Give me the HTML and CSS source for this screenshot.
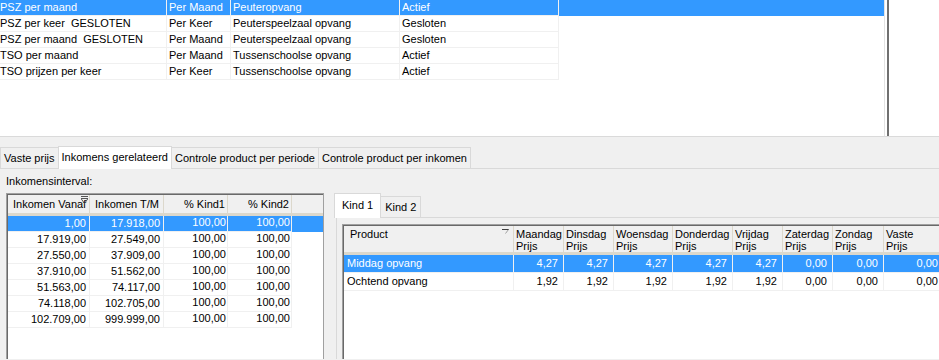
FILE: index.html
```html
<!DOCTYPE html>
<html>
<head>
<title>Producten</title>
<meta charset="utf-8">
<link rel="stylesheet" href="styles.css">
</head>
<body>
<div class="top">
  <div class="list">
    <div class="row sel"><span class="c c1">PSZ per maand</span><span class="c c2">Per Maand</span><span class="c c3">Peuteropvang</span><span class="c c4">Actief</span></div>
    <div class="row"><span class="c c1">PSZ per keer&nbsp; GESLOTEN</span><span class="c c2">Per Keer</span><span class="c c3">Peuterspeelzaal opvang</span><span class="c c4">Gesloten</span></div>
    <div class="row"><span class="c c1">PSZ per maand&nbsp; GESLOTEN</span><span class="c c2">Per Maand</span><span class="c c3">Peuterspeelzaal opvang</span><span class="c c4">Gesloten</span></div>
    <div class="row"><span class="c c1">TSO per maand</span><span class="c c2">Per Maand</span><span class="c c3">Tussenschoolse opvang</span><span class="c c4">Actief</span></div>
    <div class="row"><span class="c c1">TSO prijzen per keer</span><span class="c c2">Per Keer</span><span class="c c3">Tussenschoolse opvang</span><span class="c c4">Actief</span></div>
  </div>
  <div class="split"></div>
  <div class="side"></div>
</div>

<div class="tabs">
  <span class="tab">Vaste prijs</span>
  <span class="tab on">Inkomens gerelateerd</span>
  <span class="tab">Controle product per periode</span>
  <span class="tab">Controle product per inkomen</span>
</div>

<div class="page">
  <div class="label">Inkomensinterval:</div>
  <div class="panes">
    <div class="igrid">
      <div class="ghead">
        <span class="h w1">Inkomen Vanaf<svg class="filter" width="7" height="8" viewBox="0 0 7 8"><path d="M0 0.5H7" stroke="#555" stroke-width="1"/><path d="M0 2.5H7L3.5 7.5Z" fill="none" stroke="#555" stroke-width="1"/></svg></span>
        <span class="h w2">Inkomen T/M</span>
        <span class="h w3 r">% Kind1</span>
        <span class="h w3 r">% Kind2</span>
      </div>
      <div class="grow sel"><span class="d w1">1,00</span><span class="d w2">17.918,00</span><span class="d w3 p">100,00</span><span class="d w3 p">100,00</span></div>
      <div class="grow"><span class="d w1">17.919,00</span><span class="d w2">27.549,00</span><span class="d w3 p">100,00</span><span class="d w3 p">100,00</span></div>
      <div class="grow"><span class="d w1">27.550,00</span><span class="d w2">37.909,00</span><span class="d w3 p">100,00</span><span class="d w3 p">100,00</span></div>
      <div class="grow"><span class="d w1">37.910,00</span><span class="d w2">51.562,00</span><span class="d w3 p">100,00</span><span class="d w3 p">100,00</span></div>
      <div class="grow"><span class="d w1">51.563,00</span><span class="d w2">74.117,00</span><span class="d w3 p">100,00</span><span class="d w3 p">100,00</span></div>
      <div class="grow"><span class="d w1">74.118,00</span><span class="d w2">102.705,00</span><span class="d w3 p">100,00</span><span class="d w3 p">100,00</span></div>
      <div class="grow"><span class="d w1">102.709,00</span><span class="d w2">999.999,00</span><span class="d w3 p">100,00</span><span class="d w3 p">100,00</span></div>
    </div>

    <div class="rpane">
      <div class="ktabs">
        <span class="ktab on">Kind 1</span>
        <span class="ktab">Kind 2</span>
      </div>
      <div class="kpage">
        <div class="pgrid">
          <div class="phead">
            <span class="ph k0">Product<svg class="sort" width="7" height="5" viewBox="0 0 7 5"><path d="M0 0.5H7" stroke="#404040"/><path d="M6.5 0.5L3.5 4.5" stroke="#a0a0a0"/></svg></span>
            <span class="ph k1">Maandag<br>Prijs</span>
            <span class="ph k1">Dinsdag<br>Prijs</span>
            <span class="ph k2">Woensdag<br>Prijs</span>
            <span class="ph k3">Donderdag<br>Prijs</span>
            <span class="ph k1">Vrijdag<br>Prijs</span>
            <span class="ph k1">Zaterdag<br>Prijs</span>
            <span class="ph k4">Zondag<br>Prijs</span>
            <span class="ph k5">Vaste<br>Prijs</span>
          </div>
          <div class="prow sel"><span class="pd k0 t">Middag opvang</span><span class="pd k1">4,27</span><span class="pd k1">4,27</span><span class="pd k2">4,27</span><span class="pd k3">4,27</span><span class="pd k1">4,27</span><span class="pd k1">0,00</span><span class="pd k4">0,00</span><span class="pd k5">0,00</span></div>
          <div class="prow"><span class="pd k0 t">Ochtend opvang</span><span class="pd k1">1,92</span><span class="pd k1">1,92</span><span class="pd k2">1,92</span><span class="pd k3">1,92</span><span class="pd k1">1,92</span><span class="pd k1">0,00</span><span class="pd k4">0,00</span><span class="pd k5">0,00</span></div>
        </div>
      </div>
    </div>
  </div>
</div>
</body>
</html>
```
FILE: styles.css
```css
body {
   margin: 0;
   width: 939px;
   height: 360px;
   overflow: hidden;
   background: #f0f0f0;
   font-family: "Liberation Sans", Arial, sans-serif;
   font-size: 11px;
   color: #000;
}

/* top product list */
.top {
   display: flex;
   height: 137px;
   box-sizing: border-box;
   background: #fff;
   border-bottom: 1px solid #dadada;
}
.list {
   width: 884px;
   border-right: 1px solid #e3e3e3;
}
.split {
   width: 2px;
   margin-left: 2px;
   background: #707070;
}
.side {
   flex: 1;
}
.row {
   display: flex;
   width: 559px;
   height: 16px;
}
.row.sel {
   width: 884px;
   background: #3399ff;
   color: #fff;
}
.c {
   box-sizing: border-box;
   height: 16px;
   line-height: 15px;
   padding-left: 2px;
   border-right: 1px solid #f0f0f0;
   border-bottom: 1px solid #f0f0f0;
   white-space: nowrap;
   overflow: hidden;
}
.c1 { width: 167px; padding-left: 0; }
.c2 { width: 64px; }
.c3 { width: 169px; }
.c4 { width: 159px; }

/* main tabs */
.tabs {
   display: flex;
   align-items: flex-end;
   height: 32px;
   box-sizing: border-box;
   border-bottom: 1px solid #d9d9d9;
}
.tab {
   height: 21px;
   line-height: 20px;
   box-sizing: border-box;
   padding: 0 3px;
   border: 1px solid #d9d9d9;
   border-bottom: none;
   margin-left: -1px;
   white-space: nowrap;
}
.tab:first-child {
   margin-left: 0;
}
.tab.on {
   height: 23px;
   margin-bottom: -1px;
   line-height: 20px;
   background: #fff;
   position: relative;
}

.label {
   height: 24px;
   line-height: 24px;
   padding-left: 6px;
}
.panes {
   display: flex;
   height: 166px;
   overflow: hidden;
}

/* income grid */
.igrid {
   flex: none;
   width: 318px;
   height: 166px;
   margin-left: 6px;
   box-sizing: border-box;
   padding: 1px 0 0 1px;
   background: #fff;
   border-top: 1px solid #a0a0a0;
   border-left: 1px solid #a0a0a0;
   border-right: 1px solid #a0a0a0;
   box-shadow: inset 1px 1px 0 #696969;
}
.ghead {
   display: flex;
   height: 21px;
   box-sizing: border-box;
   background: #f0f0f0;
   border-bottom: 3px solid #dcd8cc;
}
.h {
   box-sizing: border-box;
   line-height: 18px;
   padding: 0 3px 0 5px;
   border-right: 1px solid #dcd8cc;
   white-space: nowrap;
   position: relative;
}
.h.r {
   text-align: right;
   padding-right: 2px;
}
.filter {
   position: absolute;
   left: 73px;
   top: 1px;
}
.w1 { width: 82px; }
.w2 { width: 74px; }
.w3 { width: 64px; }
.grow {
   display: flex;
   height: 16px;
}
.grow.sel {
   background: #3399ff;
   color: #fff;
}
.d {
   box-sizing: border-box;
   text-align: right;
   padding-right: 3px;
   line-height: 15px;
   border-right: 1px solid #f0f0f0;
   border-bottom: 1px solid #f0f0f0;
}
.d.p {
   padding-right: 1px;
   line-height: 12px;
}

/* child price tabs */
.rpane {
   flex: 1;
   min-width: 0;
   margin-left: 9px;
}
.ktabs {
   display: flex;
   align-items: flex-end;
   height: 24px;
   padding-left: 1px;
}
.ktab {
   height: 21px;
   line-height: 20px;
   box-sizing: border-box;
   padding: 0 4px;
   border: 1px solid #d9d9d9;
   border-bottom: none;
   margin-left: -1px;
   white-space: nowrap;
}
.ktab.on {
   height: 25px;
   margin-bottom: -1px;
   margin-left: 0;
   padding: 0 7px;
   line-height: 22px;
   background: #fff;
   position: relative;
}
.kpage {
   margin-left: 3px;
   height: 135px;
   padding: 6px 0 0 5px;
   border-top: 1px solid #d9d9d9;
   border-left: 1px solid #d9d9d9;
}
.pgrid {
   width: 620px;
   height: 135px;
   box-sizing: border-box;
   padding: 1px 0 0 1px;
   background: #fff;
   border-top: 1px solid #a0a0a0;
   border-left: 1px solid #a0a0a0;
   box-shadow: inset 1px 1px 0 #696969;
}
.phead {
   display: flex;
   height: 29px;
   box-sizing: border-box;
   background: #f0f0f0;
   border-bottom: 3px solid #dcd8cc;
}
.ph {
   flex: none;
   box-sizing: border-box;
   padding: 2px 0 0 2px;
   line-height: 12px;
   border-right: 1px solid #dcd8cc;
   white-space: nowrap;
   position: relative;
}
.ph.k0 {
   padding-left: 6px;
}
.sort {
   position: absolute;
   right: 4px;
   top: 3px;
}
.k0 { width: 170px; }
.k1 { width: 50px; }
.k2 { width: 59px; }
.k3 { width: 60px; }
.k4 { width: 51px; }
.k5 { width: 60px; }
.prow {
   display: flex;
   height: 18px;
}
.prow.sel {
   background: #3399ff;
   color: #fff;
}
.pd {
   flex: none;
   box-sizing: border-box;
   text-align: right;
   padding-right: 5px;
   line-height: 17px;
   border-right: 1px solid #f0f0f0;
   border-bottom: 1px solid #f0f0f0;
   white-space: nowrap;
}
.pd.t {
   text-align: left;
   padding-left: 3px;
}
```
